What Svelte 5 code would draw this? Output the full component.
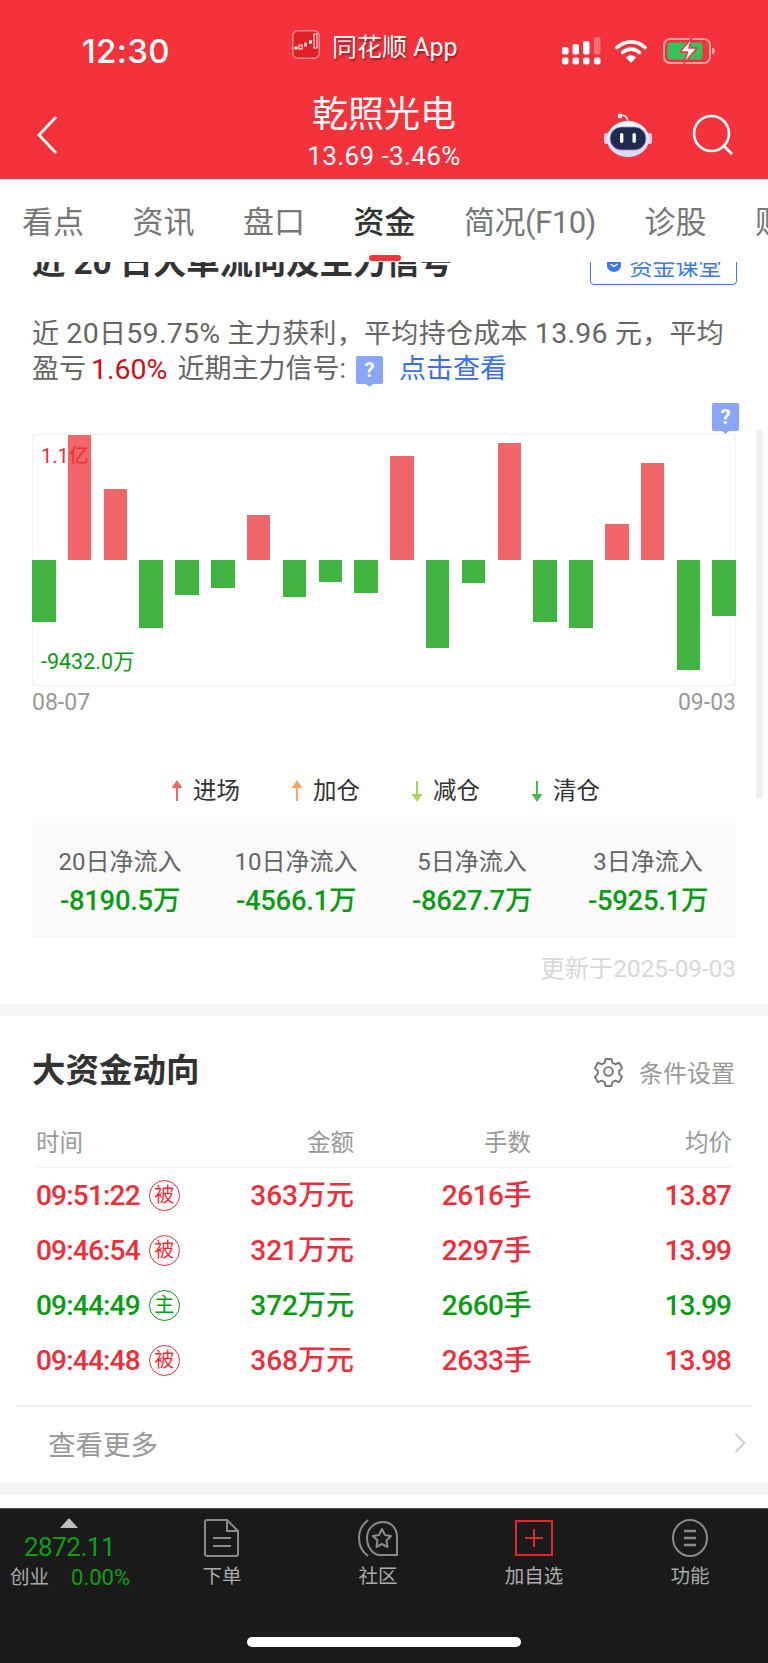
<script>
  const tabs = ['看点', '资讯', '盘口', '资金', '简况(F10)', '诊股', '财务'];
  const active = '资金';

  // bar heights in px, positive goes up from the zero line
  const bars = [-62, 125, 71, -68, -35, -28, 45, -37, -22, -33, 104, -88, -23, 117, -62, -68, 36, 97, -110, -56];

  const legend = [
    { label: '进场', color: '#f2676b', up: true },
    { label: '加仓', color: '#ffa55c', up: true },
    { label: '减仓', color: '#a8d657', up: false },
    { label: '清仓', color: '#4bb84b', up: false }
  ];

  const stats = [
    { label: '20日净流入', value: '-8190.5万' },
    { label: '10日净流入', value: '-4566.1万' },
    { label: '5日净流入', value: '-8627.7万' },
    { label: '3日净流入', value: '-5925.1万' }
  ];

  const rows = [
    { time: '09:51:22', tag: '被', amount: '363万元', hands: '2616手', price: '13.87', dir: 'red' },
    { time: '09:46:54', tag: '被', amount: '321万元', hands: '2297手', price: '13.99', dir: 'red' },
    { time: '09:44:49', tag: '主', amount: '372万元', hands: '2660手', price: '13.99', dir: 'green' },
    { time: '09:44:48', tag: '被', amount: '368万元', hands: '2633手', price: '13.98', dir: 'red' }
  ];
</script>

<div class="app">
  <header class="top">
    <div class="status">
      <span class="clock">12:30</span>
      <div class="carrier">
        <svg class="logo" viewBox="0 0 28 29" width="28" height="29">
          <rect x="0.75" y="0.75" width="26.5" height="27.5" rx="5" fill="#e02027" stroke="#f58a8c" stroke-width="1.5" />
          <rect x="2.500" y="16.500" width="3" height="3" fill="#fff" />
          <rect x="7" y="15" width="3" height="4" fill="none" stroke="#fff" stroke-width="1" />
          <rect x="12" y="12.500" width="3" height="4" fill="#f7b8b8" />
          <rect x="17" y="10.500" width="3" height="3" fill="#fff" />
          <rect x="22" y="4" width="3" height="14" fill="none" stroke="#fff" stroke-width="1" />
        </svg>
        <span>同花顺 App</span>
      </div>
      <div class="sys">
        <svg viewBox="0 0 39 28" width="39" height="28">
          <g fill="#fff">
            <rect x="0" y="10" width="6.5" height="7.500" rx="2" />
            <rect x="10.5" y="7" width="6.5" height="10.500" rx="2" />
            <rect x="21" y="4" width="6.5" height="13.500" rx="2" />
            <rect x="32" y="0" width="6.5" height="17.500" rx="2" opacity="0.3" />
            <rect x="0" y="20.5" width="6.5" height="7" rx="2" />
            <rect x="10.5" y="20.5" width="6.5" height="7" rx="2" />
            <rect x="21" y="20.5" width="6.5" height="7" rx="2" />
            <rect x="32" y="20.5" width="6.5" height="7" rx="2" />
          </g>
        </svg>
        <svg class="wifi" viewBox="0 0 32 24" width="32" height="24">
          <path d="M2 8.5C10 1 22 1 30 8.5" fill="none" stroke="#fff" stroke-width="3.6" stroke-linecap="round" />
          <path d="M7.5 13.5C12.5 9 19.5 9 24.5 13.5" fill="none" stroke="#fff" stroke-width="3.6" stroke-linecap="round" />
          <path d="M11 18.5C14 15.5 18 15.5 21 18.5L16 24Z" fill="#fff" />
        </svg>
        <svg viewBox="0 0 53 27" width="53" height="27">
          <rect x="1" y="2" width="46" height="24" rx="6" fill="none" stroke="#f9a3a6" stroke-width="2" />
          <rect x="4.5" y="5.5" width="35" height="17" rx="3" fill="#35c25a" />
          <path d="M49 10.5c2 .5 3 2 3 3.5s-1 3-3 3.5z" fill="#f9a3a6" />
          <path d="M29 0.5L17 15h7.5L21 26.5 34 11h-8z" fill="#fff" stroke="#f3323c" stroke-width="1.4" stroke-linejoin="round" />
        </svg>
      </div>
    </div>
    <div class="nav">
      <svg class="back" viewBox="0 0 22 40" width="22" height="40">
        <path d="M20 2L3 20l17 18" fill="none" stroke="#fff" stroke-width="2.8" />
      </svg>
      <div class="stock">
        <div class="name">乾照光电</div>
        <div class="quote">13.69 -3.46%</div>
      </div>
      <svg class="robot" viewBox="0 0 48 44" width="48" height="44">
        <defs>
          <linearGradient id="helmet" x1="0" y1="0" x2="0" y2="1">
            <stop offset="0" stop-color="#ffffff" />
            <stop offset="1" stop-color="#d3d6f7" />
          </linearGradient>
        </defs>
        <path d="M16 3c4-2 7 0 8 6" fill="none" stroke="#e4e4f6" stroke-width="1.6" />
        <circle cx="16" cy="3" r="2.4" fill="#e8e8f8" />
        <rect x="0" y="20" width="5" height="11" rx="2.500" fill="#cfd2f4" />
        <rect x="43" y="20" width="5" height="11" rx="2.500" fill="#cfd2f4" />
        <ellipse cx="24" cy="26" rx="21" ry="18" fill="url(#helmet)" />
        <rect x="6" y="14" width="36" height="23" rx="11.500" fill="#1f2a4d" stroke="#a78bf0" stroke-width="0.8" />
        <rect x="16" y="20" width="3.400" height="10" rx="1.700" fill="#fff" />
        <rect x="28.500" y="20" width="3.400" height="10" rx="1.700" fill="#fff" />
      </svg>
      <svg class="search" viewBox="0 0 42 42" width="42" height="42">
        <circle cx="19.5" cy="19.5" r="17.5" fill="none" stroke="#fff" stroke-width="2.6" />
        <path d="M32 32l8 8" stroke="#fff" stroke-width="2.6" />
      </svg>
    </div>
  </header>

  <nav class="tabs">
    {#each tabs as tab}
      <span class="tab" class:on={tab === active}>{tab}</span>
    {/each}
  </nav>

  <main class="content">
    <section class="flow">
      <div class="flow-head">
        <h2>近 20 日大单流向及主力信号</h2>
        <div class="lesson">
          <svg viewBox="0 0 16 16" width="16" height="16">
            <path d="M1 2l7 2 7-2v7c0 3-4 6-7 6s-7-3-7-6z" fill="#3f78ee" />
            <path d="M4.5 7L8 9.5 11.5 7" fill="none" stroke="#fff" stroke-width="1.4" />
          </svg>
          资金课堂
        </div>
      </div>

      <div class="desc">
        <div class="desc-one">近 <span class="num">20</span>日<span class="num">59.75%</span> 主力获利，平均持仓成本 <span class="num">13.96</span> 元，平均</div>
        <div class="desc-two">
          盈亏
          <span class="loss">1.60%</span>
          <span class="signal">近期主力信号:</span>
          <svg class="help" viewBox="0 0 27 31" width="27" height="31">
            <path d="M2 0h23a2 2 0 0 1 2 2v24a2 2 0 0 1-2 2h-8l-3.500 3L10 28H2a2 2 0 0 1-2-2V2a2 2 0 0 1 2-2z" fill="#8aa6fb" />
            <text x="13.500" y="21" text-anchor="middle" font-size="20" font-weight="700" fill="#fff">?</text>
          </svg>
          <span class="link">点击查看</span>
        </div>
      </div>

      <div class="chart">
        <svg class="help-top" viewBox="0 0 27 31" width="27" height="31">
          <path d="M2 0h23a2 2 0 0 1 2 2v24a2 2 0 0 1-2 2h-8l-3.500 3L10 28H2a2 2 0 0 1-2-2V2a2 2 0 0 1 2-2z" fill="#8aa6fb" />
          <text x="13.500" y="21" text-anchor="middle" font-size="20" font-weight="700" fill="#fff">?</text>
        </svg>
        <div class="bars">
          {#each bars as bar}
            <div class="slot">
              <div class="half up">
                {#if bar > 0}<i class="bar red-bar" style="height:{bar}px"></i>{/if}
              </div>
              <div class="half">
                {#if bar < 0}<i class="bar green-bar" style="height:{-bar}px"></i>{/if}
              </div>
            </div>
          {/each}
        </div>
        <span class="max">1.1亿</span>
        <span class="min">-9432.0万</span>
      </div>
      <div class="dates">
        <span>08-07</span>
        <span>09-03</span>
      </div>

      <div class="legend">
        {#each legend as item}
          <div class="legend-item">
            <svg viewBox="0 0 12 22" width="12" height="22">
              {#if item.up}
                <path d="M6 21V6" stroke={item.color} stroke-width="2" />
                <path d="M6 0l5.500 8H.5z" fill={item.color} />
              {:else}
                <path d="M6 1v15" stroke={item.color} stroke-width="2" />
                <path d="M6 22l5.500-8H.5z" fill={item.color} />
              {/if}
            </svg>
            <span>{item.label}</span>
          </div>
        {/each}
      </div>

      <div class="stats">
        {#each stats as stat}
          <div class="stat">
            <div class="stat-label">{stat.label}</div>
            <div class="stat-value">{stat.value}</div>
          </div>
        {/each}
      </div>
      <div class="updated">更新于2025-09-03</div>
    </section>

    <section class="big">
      <div class="big-head">
        <h2>大资金动向</h2>
        <div class="settings">
          <svg viewBox="0 0 32 32" width="31" height="31">
            <path d="M13 3h6l1 4 3 1.500 4-1.500 3 5.500-3 3v3l3 3-3 5.500-4-1.500-3 1.500-1 4h-6l-1-4-3-1.500-4 1.500-3-5.500 3-3v-3l-3-3 3-5.500 4 1.500 3-1.500z" fill="none" stroke="#777" stroke-width="2" stroke-linejoin="round" />
            <circle cx="16" cy="16" r="4.500" fill="none" stroke="#777" stroke-width="2" />
          </svg>
          <span>条件设置</span>
        </div>
      </div>

      <div class="table-head">
        <span>时间</span>
        <span>金额</span>
        <span>手数</span>
        <span>均价</span>
      </div>
      {#each rows as row}
        <div class="row {row.dir}">
          <div class="time">
            <span class="clock-cell">{row.time}</span>
            <span class="badge">{row.tag}</span>
          </div>
          <span>{row.amount}</span>
          <span class="tight">{row.hands}</span>
          <span class="price">{row.price}</span>
        </div>
      {/each}

      <div class="more">
        <span>查看更多</span>
        <svg viewBox="0 0 12 20" width="12" height="20">
          <path d="M1.500 1l9 9-9 9" fill="none" stroke="#ccc" stroke-width="1.800" />
        </svg>
      </div>
    </section>
    <div class="sep"></div>
  </main>

  <footer class="foot">
    <div class="foot-row">
      <div class="index">
        <i class="tri"></i>
        <div class="index-value">2872.11</div>
        <div class="index-line"><span class="index-name">创业</span><span class="index-pct">0.00%</span></div>
      </div>
      <div class="action">
        <svg viewBox="0 0 36 38" width="36" height="38">
          <path d="M3 1h20l11 11v23a2 2 0 0 1-2 2H3a2 2 0 0 1-2-2V3a2 2 0 0 1 2-2z" fill="none" stroke="#8a8a8a" stroke-width="2" />
          <path d="M23 1v11h11M9 19h18M9 27h18" fill="none" stroke="#8a8a8a" stroke-width="2" />
        </svg>
        <span>下单</span>
      </div>
      <div class="action">
        <svg viewBox="0 0 40 38" width="40" height="38">
          <path d="M10 1C-2 10-2 28 10 37" fill="none" stroke="#8a8a8a" stroke-width="2" />
          <path d="M25 3C16 3 9 10 9 19c0 9 6 17 13 17h17V18C39 9 33 3 25 3z" fill="none" stroke="#8a8a8a" stroke-width="2" />
          <path d="M24 10l3 6 6 1-4.500 4.500 1 6.500-5.500-3-5.500 3 1-6.500L15 17l6-1z" fill="none" stroke="#8a8a8a" stroke-width="2" stroke-linejoin="round" />
        </svg>
        <span>社区</span>
      </div>
      <div class="action">
        <svg viewBox="0 0 38 36" width="38" height="38">
          <rect x="1" y="1" width="36" height="34" fill="none" stroke="#e2282e" stroke-width="2" />
          <path d="M19 9v18M10 18h18" stroke="#e2282e" stroke-width="2" />
        </svg>
        <span>加自选</span>
      </div>
      <div class="action">
        <svg viewBox="0 0 36 38" width="36" height="38">
          <ellipse cx="18" cy="19" rx="17" ry="18" fill="none" stroke="#8a8a8a" stroke-width="2" />
          <path d="M12 12h12M12 19h12M12 26h12" stroke="#8a8a8a" stroke-width="2.400" />
        </svg>
        <span>功能</span>
      </div>
    </div>
    <div class="home"></div>
  </footer>

  <div class="scrollbar"></div>
</div>

<style>
  :global(body) {
    margin: 0;
    background: #fff;
  }

  .app {
    position: relative;
    width: 768px;
    height: 1663px;
    overflow: hidden;
    display: flex;
    flex-direction: column;
    font-family: Roboto, "Noto Sans CJK SC", sans-serif;
    color: #333;
  }

  .top {
    flex: none;
    height: 179px;
    background: #f3323c;
    color: #fff;
  }

  .status {
    height: 92px;
    display: flex;
    position: relative;
  }

  .clock {
    margin: 32px 0 0 82px;
    font: 500 33px/38px Inter, sans-serif;
    letter-spacing: 0.4px;
  }

  .carrier {
    margin: 30px 0 0 122px;
    display: flex;
    align-items: center;
    gap: 12px;
    height: 29px;
    font-size: 25px;
    text-shadow: 1px 2px 2px rgba(90, 0, 0, 0.55);
  }

  .sys {
    margin: 37px 0 0 104px;
    display: flex;
    align-items: flex-start;
    gap: 14px;
    height: 28px;
  }

  .wifi {
    margin: 2px 2px 0 0;
  }

  .nav {
    height: 87px;
    display: flex;
    position: relative;
  }

  .back {
    margin: 23px 0 0 36px;
  }

  .stock {
    position: absolute;
    left: 0;
    right: 0;
    top: 2px;
    text-align: center;
  }

  .name {
    font-size: 36px;
    line-height: 42px;
  }

  .quote {
    font-size: 26px;
    line-height: 32px;
    margin-top: 4px;
    letter-spacing: 0.4px;
  }

  .robot {
    margin: 21px 0 0 546px;
  }

  .search {
    margin: 22px 0 0 40px;
  }

  .tabs {
    flex: none;
    height: 83px;
    box-sizing: border-box;
    padding: 24px 0 0 22px;
    display: flex;
    gap: 48.500px;
    white-space: nowrap;
    font-size: 31px;
    line-height: 40px;
    color: #777;
    background: #fff;
    position: relative;
    z-index: 1;
  }

  .tab {
    position: relative;
    flex: none;
  }

  .tab:nth-child(5) {
    letter-spacing: -0.5px;
  }

  .tab.on {
    color: #333;
    font-weight: 500;
  }

  .tab.on::after {
    content: "";
    position: absolute;
    left: 15px;
    right: 15px;
    top: 52px;
    height: 6px;
    border-radius: 3px;
    background: #f5333b;
  }

  .content {
    flex: 1;
    min-height: 0;
    overflow: hidden;
  }

  .flow {
    padding: 0 32px;
    border-bottom: 12px solid #f5f5f5;
    height: 764px;
  }

  .flow-head {
    margin-top: -22px;
    height: 45px;
    display: flex;
    justify-content: space-between;
    align-items: flex-end;
  }

  .flow-head h2 {
    letter-spacing: -0.2px;
  }

  h2 {
    margin: 0;
    font-weight: 700;
    font-size: 33.500px;
    line-height: 44px;
    color: #333;
  }

  .lesson {
    width: 147px;
    height: 45px;
    margin-right: -1px;
    box-sizing: border-box;
    border: 1px solid #3f78ee;
    border-radius: 4px;
    display: flex;
    align-items: center;
    justify-content: center;
    gap: 8px;
    padding-top: 4px;
    font-size: 23px;
    color: #3f78ee;
  }

  .desc {
    margin-top: 31px;
    font-size: 27px;
    line-height: 35px;
    color: #666;
    white-space: nowrap;
  }

  .desc-one {
    letter-spacing: 0.3px;
  }

  .num {
    font-size: 28.500px;
  }

  .desc-two {
    display: flex;
    align-items: center;
    gap: 5px;
  }

  .loss {
    color: #cc0f14;
    font-size: 28.500px;
    margin-right: 5px;
  }

  .help {
    margin: 4px 0 0 5px;
  }

  .link {
    color: #3a6ff5;
    margin-left: 11px;
  }

  .chart {
    position: relative;
    height: 252px;
    margin-top: 47px;
    box-shadow: inset 0 0 0 1px #f2f2f2;
  }

  .help-top {
    position: absolute;
    right: -3px;
    top: -31px;
  }

  .bars {
    height: 100%;
    display: flex;
    justify-content: space-between;
    box-sizing: border-box;
    padding-top: 1px;
  }

  .slot {
    width: 23.5px;
  }

  .half {
    height: 125px;
    display: flex;
  }

  .half.up {
    align-items: flex-end;
  }

  .bar {
    display: block;
    width: 100%;
  }

  .red-bar {
    background: #f26569;
  }

  .green-bar {
    background: #40b340;
  }

  .max,
  .min {
    position: absolute;
    left: 9px;
    line-height: 24px;
  }

  .max {
    top: 10px;
    font-size: 20px;
    color: #f02d35;
  }

  .min {
    top: 216px;
    font-size: 21.500px;
    color: #0a9c14;
  }

  .dates {
    margin-top: 6px;
    display: flex;
    justify-content: space-between;
    font-size: 23px;
    line-height: 22px;
    color: #999;
  }

  .legend {
    margin-top: 66px;
    height: 22px;
    display: flex;
    padding-left: 139px;
    gap: 51px;
  }

  .legend-item {
    display: flex;
    align-items: center;
    gap: 10px;
    font-size: 23.500px;
    line-height: 22px;
    color: #333;
  }

  .stats {
    margin-top: 21px;
    height: 115px;
    background: #fafafa;
    display: grid;
    grid-template-columns: repeat(4, 1fr);
    text-align: center;
  }

  .stat-label {
    margin-top: 24px;
    font-size: 24px;
    line-height: 30px;
    color: #666;
  }

  .stat-value {
    margin-top: 7px;
    font-size: 27.500px;
    line-height: 34px;
    font-weight: 500;
    letter-spacing: -0.3px;
    color: #0a9c14;
  }

  .updated {
    margin-top: 18px;
    text-align: right;
    font-size: 24.300px;
    line-height: 26px;
    color: #d8d8d8;
  }

  .big {
    padding: 0 36px;
    position: relative;
  }

  .big-head {
    margin: 33px -3px 0 -4px;
    height: 44px;
    display: flex;
    justify-content: space-between;
    align-items: center;
  }

  .settings {
    display: flex;
    align-items: center;
    gap: 15px;
    font-size: 24px;
    color: #999;
  }

  .table-head,
  .row {
    display: grid;
    grid-template-columns: 150px 168px 177px 201px;
    text-align: right;
    white-space: nowrap;
  }

  .table-head {
    margin-top: 35px;
    padding-bottom: 9px;
    border-bottom: 1px solid #f0f0f0;
    font-size: 23.500px;
    line-height: 30px;
    color: #999;
  }

  .table-head span:first-child {
    text-align: left;
  }

  .row {
    height: 55px;
    align-items: center;
    font-size: 28px;
    line-height: 32px;
    font-weight: 500;
  }

  .row.red {
    color: #f02d3a;
  }

  .row.green {
    color: #0a9c14;
  }

  .row > span {
    height: 32px;
    overflow: visible;
  }

  .time {
    display: flex;
    align-items: center;
    gap: 9px;
    text-align: left;
  }

  .clock-cell {
    letter-spacing: -0.8px;
  }

  .tight {
    letter-spacing: -0.5px;
  }

  .price {
    letter-spacing: -1px;
    padding-right: 1px;
  }

  .badge {
    flex: none;
    width: 29px;
    height: 29px;
    border: 1px solid currentColor;
    border-radius: 50%;
    font-size: 20px;
    font-weight: 400;
    line-height: 28px;
    text-align: center;
    letter-spacing: 0;
  }

  .more {
    margin: 17px -20px 0;
    height: 78px;
    box-sizing: border-box;
    border-top: 2px solid #f2f2f2;
    display: flex;
    justify-content: space-between;
    align-items: center;
    padding: 0 6px 5px 32px;
    font-size: 27.500px;
    color: #999;
  }

  .sep {
    height: 12px;
    background: #f5f5f5;
  }

  .foot {
    flex: none;
    height: 155px;
    box-sizing: border-box;
    background: #1a1a1a;
    border-top: 1px solid #555;
    position: relative;
  }

  .foot-row {
    display: flex;
    height: 128px;
  }

  .index {
    width: 144px;
    flex: none;
    position: relative;
  }

  .tri {
    display: block;
    width: 0;
    margin: 9px 0 0 60px;
    border-left: 9px solid transparent;
    border-right: 9px solid transparent;
    border-bottom: 10px solid #bdbdbd;
  }

  .index-value {
    margin: 3px 0 0 24px;
    font-size: 26px;
    line-height: 32px;
    color: #0ba00f;
    letter-spacing: -0.5px;
  }

  .index-line {
    margin: 0 0 0 10px;
    display: flex;
    gap: 22px;
    align-items: center;
    line-height: 30px;
  }

  .index-name {
    font-size: 19.500px;
    color: #aaa;
  }

  .index-pct {
    font-size: 22px;
    color: #0ba00f;
  }

  .action {
    flex: 1;
    display: flex;
    flex-direction: column;
    align-items: center;
    padding-top: 10px;
    gap: 6px;
    font-size: 19.500px;
    line-height: 28px;
    color: #aaa;
  }

  .home {
    width: 274px;
    height: 10px;
    margin: 0 auto;
    border-radius: 5px;
    background: #fff;
  }

  .scrollbar {
    position: absolute;
    left: 756px;
    top: 429px;
    width: 7px;
    height: 370px;
    border-radius: 4px;
    background: #f0f0f0;
  }
</style>
